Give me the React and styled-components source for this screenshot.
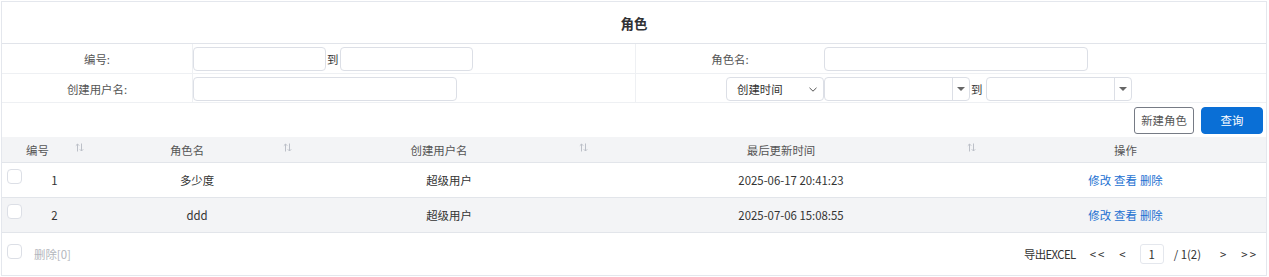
import React from 'react'
import styled, { createGlobalStyle } from 'styled-components'

const GlobalStyle = createGlobalStyle`
    body {
        margin: 0;
        font-family: "Noto Sans CJK SC", "Noto Sans", sans-serif;
        font-size: 11.4px;
        color: #333;
        background: #fff;
    }
`

const Page = styled.div`
    padding: 1px 2px 1px 1px;
`

const Panel = styled.div`
    border: 1px solid #e4e7ed;
`

const Title = styled.div`
    height: 41px;
    display: flex;
    align-items: center;
    justify-content: center;
    font-size: 13.5px;
    font-weight: bold;
    color: #303133;
    border-bottom: 1px solid #e1e4ea;
`

const FilterGrid = styled.div`
    display: grid;
    grid-template-columns: 190px 443px 189px 1fr;
`

const Cell = styled.div`
    box-sizing: border-box;
    height: ${p => p.h}px;
    border-bottom: 1px solid #eef0f3;
    border-left: ${p => (p.divider ? '1px solid #eef0f3' : 'none')};
    display: flex;
    align-items: flex-start;
    padding-top: 3px;
    justify-content: ${p => p.justify || 'flex-start'};
`

const Label = styled.span`
    color: #555;
    line-height: 24px;
    width: 100%;
    text-align: center;
`

const TextInput = styled.div`
    box-sizing: border-box;
    width: ${p => p.w}px;
    height: 24px;
    border: 1px solid #dcdfe6;
    border-radius: 4px;
    background: #fff;
`

const To = styled.span`
    line-height: 24px;
    margin: 0 ${p => p.right}px 0 1px;
    color: #333;
`

const Select = styled.div`
    box-sizing: border-box;
    width: 98px;
    height: 24px;
    border: 1px solid #dcdfe6;
    border-radius: 4px;
    padding: 0 6px 0 10px;
    display: flex;
    align-items: center;
    justify-content: space-between;
    color: #333;
`

const DateInput = styled.div`
    box-sizing: border-box;
    width: ${p => p.w}px;
    height: 24px;
    border: 1px solid #dcdfe6;
    border-radius: 4px;
    display: flex;
    justify-content: flex-end;
`

const DateButton = styled.div`
    width: 16px;
    border-left: 1px solid #dcdfe6;
    display: flex;
    align-items: center;
    justify-content: center;
`

const Caret = styled.span`
    width: 0;
    height: 0;
    border-left: 4px solid transparent;
    border-right: 4px solid transparent;
    border-top: 4px solid #666;
`

const ButtonRow = styled.div`
    height: 34px;
    display: flex;
    justify-content: flex-end;
    align-items: center;
    gap: 7px;
    padding-right: 3px;
`

const Button = styled.button`
    box-sizing: border-box;
    height: 27px;
    width: ${p => (p.primary ? 62 : 60)}px;
    padding: 0;
    font-family: inherit;
    font-size: 11.4px;
    border-radius: ${p => (p.primary ? 4 : 3)}px;
    border: 1px solid ${p => (p.primary ? '#0a6fd6' : '#767b85')};
    background: ${p => (p.primary ? '#0a6fd6' : '#fff')};
    color: ${p => (p.primary ? '#fff' : '#555')};
`

const TableRow = styled.div`
    display: grid;
    grid-template-columns: 91px 208px 296px 388px 1fr;
    height: ${p => p.h}px;
    background: ${p => (p.shaded ? '#f3f4f6' : '#fff')};
    border-bottom: 1px solid #e2e5ea;
`

const HeadCell = styled.div`
    position: relative;
    box-sizing: border-box;
    padding-right: ${p => (p.sortable ? 20 : 0)}px;
    display: flex;
    align-items: center;
    justify-content: center;
    color: #555;
`

const SortIcon = styled.svg`
    position: absolute;
    right: 9px;
    top: 6px;
`

const DataCell = styled.div`
    position: relative;
    box-sizing: border-box;
    padding-left: ${p => (p.first ? 14 : 0)}px;
    display: flex;
    align-items: center;
    justify-content: center;
    color: #333;
`

const CheckBox = styled.span`
    position: absolute;
    left: 5px;
    top: ${p => p.top}px;
    box-sizing: border-box;
    width: 15px;
    height: 15px;
    border: 1px solid #dcdfe6;
    border-radius: 4px;
    background: #fff;
`

const Link = styled.a`
    color: #1a6fd1;
    margin: 0 1.5px;
`

const Footer = styled.div`
    position: relative;
    height: 42px;
    display: flex;
    align-items: center;
    justify-content: space-between;
    padding: 0 8px 0 32px;
`

const Muted = styled.span`
    color: #b3b6bc;
`

const Pager = styled.div`
    display: flex;
    align-items: center;
    color: #333;
`

const Export = styled.span`
    letter-spacing: -0.6px;
`

const PagerItem = styled.span`
    margin-left: ${p => p.gap}px;
    letter-spacing: ${p => p.spacing || 0}px;
`

const PageBox = styled.div`
    box-sizing: border-box;
    margin-left: 14px;
    width: 24px;
    height: 20px;
    border: 1px solid #e4e7ed;
    border-radius: 3px;
    display: flex;
    align-items: center;
    justify-content: center;
`

const Sort = () => (
    <SortIcon width="9" height="9" viewBox="0 0 9 9" fill="none" stroke="#bcc0c8" strokeWidth="1">
        <path d="M2.5 8.5V1M0.8 2.7L2.5 1L4.2 2.7" />
        <path d="M6.5 0.5V8M4.8 6.3L6.5 8L8.2 6.3" />
    </SortIcon>
)

const Chevron = () => (
    <svg width="8" height="5" viewBox="0 0 8 5" fill="none" stroke="#555" strokeWidth="1">
        <path d="M0.5 0.8L4 4.2L7.5 0.8" />
    </svg>
)

const rows = [
    { id: 1, name: '多少度', user: '超级用户', time: '2025-06-17 20:41:23' },
    { id: 2, name: 'ddd', user: '超级用户', time: '2025-07-06 15:08:55' }
]

const App = () => {
    return (
        <Page>
            <GlobalStyle />
            <Panel>
                <Title>角色</Title>
                <FilterGrid>
                    <Cell h={30}><Label>编号:</Label></Cell>
                    <Cell h={30} divider>
                        <TextInput w={133} />
                        <To right={2}>到</To>
                        <TextInput w={133} />
                    </Cell>
                    <Cell h={30} divider><Label>角色名:</Label></Cell>
                    <Cell h={30}><TextInput w={264} /></Cell>

                    <Cell h={29}><Label>创建用户名:</Label></Cell>
                    <Cell h={29} divider><TextInput w={264} /></Cell>
                    <Cell h={29} divider justify="flex-end">
                        <Select>创建时间<Chevron /></Select>
                    </Cell>
                    <Cell h={29}>
                        <DateInput w={146}><DateButton><Caret /></DateButton></DateInput>
                        <To right={4}>到</To>
                        <DateInput w={146}><DateButton><Caret /></DateButton></DateInput>
                    </Cell>
                </FilterGrid>
                <ButtonRow>
                    <Button>新建角色</Button>
                    <Button primary>查询</Button>
                </ButtonRow>
                <TableRow h={25} shaded>
                    <HeadCell sortable>编号<Sort /></HeadCell>
                    <HeadCell sortable>角色名<Sort /></HeadCell>
                    <HeadCell sortable>创建用户名<Sort /></HeadCell>
                    <HeadCell sortable>最后更新时间<Sort /></HeadCell>
                    <HeadCell>操作</HeadCell>
                </TableRow>
                {rows.map((r, i) => (
                    <TableRow key={r.id} h={34} shaded={i % 2 === 1}>
                        <DataCell first>
                            <CheckBox top={6} />
                            {r.id}
                        </DataCell>
                        <DataCell>{r.name}</DataCell>
                        <DataCell>{r.user}</DataCell>
                        <DataCell>{r.time}</DataCell>
                        <DataCell>
                            <Link>修改</Link><Link>查看</Link><Link>删除</Link>
                        </DataCell>
                    </TableRow>
                ))}
                <Footer>
                    <CheckBox top={11} />
                    <Muted>删除[0]</Muted>
                    <Pager>
                        <Export>导出EXCEL</Export>
                        <PagerItem gap={14} spacing={2}>&lt;&lt;</PagerItem>
                        <PagerItem gap={13}>&lt;</PagerItem>
                        <PageBox>1</PageBox>
                        <PagerItem gap={10}>/ 1(2)</PagerItem>
                        <PagerItem gap={19}>&gt;</PagerItem>
                        <PagerItem gap={15} spacing={2}>&gt;&gt;</PagerItem>
                    </Pager>
                </Footer>
            </Panel>
        </Page>
    )
}

export default App
